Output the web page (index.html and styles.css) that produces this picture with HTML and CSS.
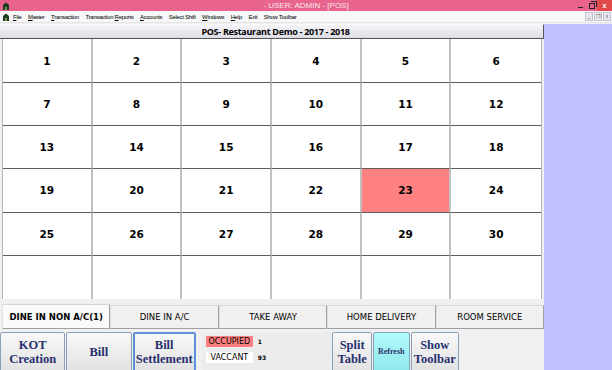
FILE: index.html
```html
<!DOCTYPE html>
<html lang="en">
<head>
    <meta charset="UTF-8">
    <title>POS</title>
    <link rel="stylesheet" href="styles.css">
</head>
<body>

    <div class="titlebar">
        <svg class="app-icon" width="8" height="8" viewBox="0 0 8 8"><path d="M1 8V3L4 0.5 7 3V8Z" fill="#1d3b1d"/><rect x="3" y="5" width="2" height="3" fill="#7a9a5a"/></svg>
        <div class="title">- USER: ADMIN - [POS]</div>
        <div class="win-btn"><span class="min-icon"></span></div>
        <div class="win-btn"><span class="max-icon"></span></div>
        <div class="win-btn close">x</div>
    </div>

    <div class="menubar">
        <svg class="app-icon" width="8" height="8" viewBox="0 0 8 8"><path d="M1 8V3L4 0.5 7 3V8Z" fill="#1d3b1d"/><rect x="3" y="5" width="2" height="3" fill="#7a9a5a"/></svg>
        <span><u>F</u>ile</span>
        <span><u>M</u>aster</span>
        <span><u>T</u>ransaction</span>
        <span>Transaction <u>R</u>eports</span>
        <span><u>A</u>ccounts</span>
        <span>Select Shift</span>
        <span><u>W</u>indows</span>
        <span><u>H</u>elp</span>
        <span>Exit</span>
        <span>Show Toolbar</span>
        <div class="mdi-btns">
            <span>_</span><span>&#10064;</span><span>x</span>
        </div>
    </div>

    <div class="workspace">
        <div class="pos-window">
            <div class="header">POS- Restaurant Demo - 2017 - 2018</div>

            <div class="table-grid" id="tableGrid"></div>

            <div class="tabs">
                <div class="tab active">DINE IN NON A/C(1)</div>
                <div class="tab">DINE IN A/C</div>
                <div class="tab">TAKE AWAY</div>
                <div class="tab">HOME DELIVERY</div>
                <div class="tab">ROOM SERVICE</div>
            </div>

            <div class="bottom-bar">
                <button class="btn">KOT<br>Creation</button>
                <button class="btn">Bill</button>
                <button class="btn btn-focus">Bill<br>Settlement</button>

                <div class="legend">
                    <div class="legend-row"><span class="badge occupied">OCCUPIED</span><span class="count">1</span></div>
                    <div class="legend-row"><span class="badge vacant">VACCANT</span><span class="count">93</span></div>
                </div>

                <button class="btn btn-small">Split<br>Table</button>
                <button class="btn btn-small btn-cyan">Refresh</button>
                <button class="btn btn-small btn-show">Show<br>Toolbar</button>
            </div>
        </div>
    </div>

    <script>
        // 36 cells, 30 numbered tables
        let grid = document.getElementById("tableGrid");
        for (let i = 1; i <= 36; i++) {
            let cell = document.createElement("div");
            cell.className = "cell";
            if (i <= 30) cell.innerText = i;
            if (i == 23) cell.classList.add("occupied");
            grid.appendChild(cell);
        }
    </script>

</body>
</html>
```

FILE: styles.css
```css
body {
    margin: 0;
    width: 612px;
    height: 370px;
    overflow: hidden;
    font-family: "DejaVu Sans", sans-serif;
    background-color: #f0f0f0;
}
.titlebar {
    height: 11px;
    background-color: #e8648c;
    display: flex;
    align-items: center;
}
.app-icon {
    flex: none;
    margin: 0 3px 0 2px;
}
.title {
    flex: 1;
    padding-left: 24px;
    text-align: center;
    font-family: "Liberation Sans", sans-serif;
    font-size: 8px;
    line-height: 11px;
    color: #fbe4ec;
}
.win-btn {
    flex: none;
    width: 11px;
    height: 11px;
    display: flex;
    align-items: center;
    justify-content: center;
}
.min-icon {
    width: 5px;
    height: 1px;
    margin-top: 3px;
    background-color: #222;
}
.max-icon {
    width: 4px;
    height: 4px;
    border: 1px solid #222;
    box-shadow: 1px -1px 0 0 #e8648c, 2px -2px 0 0 #222;
}
.win-btn.close {
    width: 15px;
    background-color: #e04a4a;
    color: white;
    font-family: "Liberation Sans", sans-serif;
    font-weight: bold;
    font-size: 7px;
}
.menubar {
    height: 11px;
    background-color: #f7f7f7;
    display: flex;
    align-items: center;
    font-family: "Liberation Sans", sans-serif;
    font-size: 6px;
    letter-spacing: -0.3px;
    color: #000;
    border-bottom: 1px solid #e4e4e4;
}
.menubar span {
    margin-right: 6.5px;
}
.menubar .app-icon {
    margin-right: 3px;
}
.mdi-btns {
    margin-left: auto;
    display: flex;
}
.mdi-btns span {
    width: 6px;
    height: 7px;
    margin: 0 1px 0 0;
    border: 1px solid #c4c4d4;
    background: #e8e8ee;
    font-size: 5px;
    line-height: 6px;
    text-align: center;
    color: #555;
    letter-spacing: 0;
}
.workspace {
    background-color: #c0c0ff;
    height: 347px;
}
.pos-window {
    width: 544px;
    background-color: #f0f0f0;
}
.header {
    height: 13px;
    margin-top: 1px;
    background: linear-gradient(#f4f4f8, #dcdce6);
    border-top: 1px solid #fafafa;
    border-right: 1px solid #555;
    border-bottom: 1px solid #555;
    font-family: "Open Sans", sans-serif;
    font-weight: bold;
    font-size: 9px;
    line-height: 13px;
    text-align: center;
    letter-spacing: -0.3px;
    padding-left: 8px;
}
.table-grid {
    margin-left: 2px;
    width: 540px;
    height: 260px;
    display: grid;
    grid-template-columns: repeat(6, 1fr);
    grid-template-rows: 44px repeat(5, 1fr);
    background-color: white;
    border-left: 1px solid #b4b4b4;
    border-right: 1px solid #b4b4b4;
    box-sizing: border-box;
}
.cell {
    display: flex;
    align-items: center;
    justify-content: center;
    border-right: 2px solid #c0c0c0;
    border-bottom: 1px solid #5c5c5c;
    font-family: "DejaVu Sans", sans-serif;
    font-weight: bold;
    font-size: 10.5px;
    color: #000;
}
.cell:nth-child(6n) {
    border-right: none;
}
.cell:nth-last-child(-n+6) {
    border-bottom: none;
}
.cell.occupied {
    background-color: #ff8080;
}
.tabs {
    display: flex;
    margin: 5px 0 0 2px;
    height: 25px;
    width: 542px;
}
.tab {
    flex: 1;
    margin-top: 1px;
    border: 1px solid #a0a0a0;
    border-top-color: #d8d8d8;
    border-left-color: #e0e0e0;
    background-color: #f0f0f0;
    display: flex;
    align-items: center;
    justify-content: center;
    font-family: "DejaVu Sans", sans-serif;
    font-size: 8.5px;
    color: #000;
}
.tab.active {
    margin-top: 0;
    background-color: #fafafa;
    font-weight: bold;
}
.bottom-bar {
    margin-top: 3px;
    width: 460px;
    height: 40px;
    display: flex;
    align-items: stretch;
    background-color: #f0f0f0;
}
.btn {
    width: 66px;
    margin-right: 1px;
    padding: 0;
    border: 1px solid #8aa0b8;
    border-radius: 2px;
    background: linear-gradient(#f8f8f8, #e2e2e2);
    font-family: "Liberation Serif", serif;
    font-weight: bold;
    font-size: 12.5px;
    line-height: 14px;
    color: #27306e;
}
.btn-focus {
    width: 64px;
    border: 2px solid #5b8fd6;
}
.legend {
    width: 128px;
    margin-left: 5px;
    padding: 4px 0 0 4px;
    background-color: #ececec;
}
.legend-row {
    display: flex;
    align-items: center;
    height: 11px;
    margin-bottom: 5px;
}
.badge {
    width: 47px;
    height: 11px;
    line-height: 11px;
    font-family: "DejaVu Sans", sans-serif;
    font-size: 8px;
    text-align: center;
}
.badge.occupied {
    background-color: #ff8080;
}
.badge.vacant {
    background-color: #fff;
}
.count {
    margin-left: 5px;
    font-family: "DejaVu Sans", sans-serif;
    font-weight: bold;
    font-size: 6px;
}
.btn-small {
    width: 40px;
    font-size: 12.5px;
}
.btn-cyan {
    width: 37px;
    background: linear-gradient(#b0fafa, #90e8ec);
    font-size: 8px;
}
.btn-show {
    width: 49px;
}
```
